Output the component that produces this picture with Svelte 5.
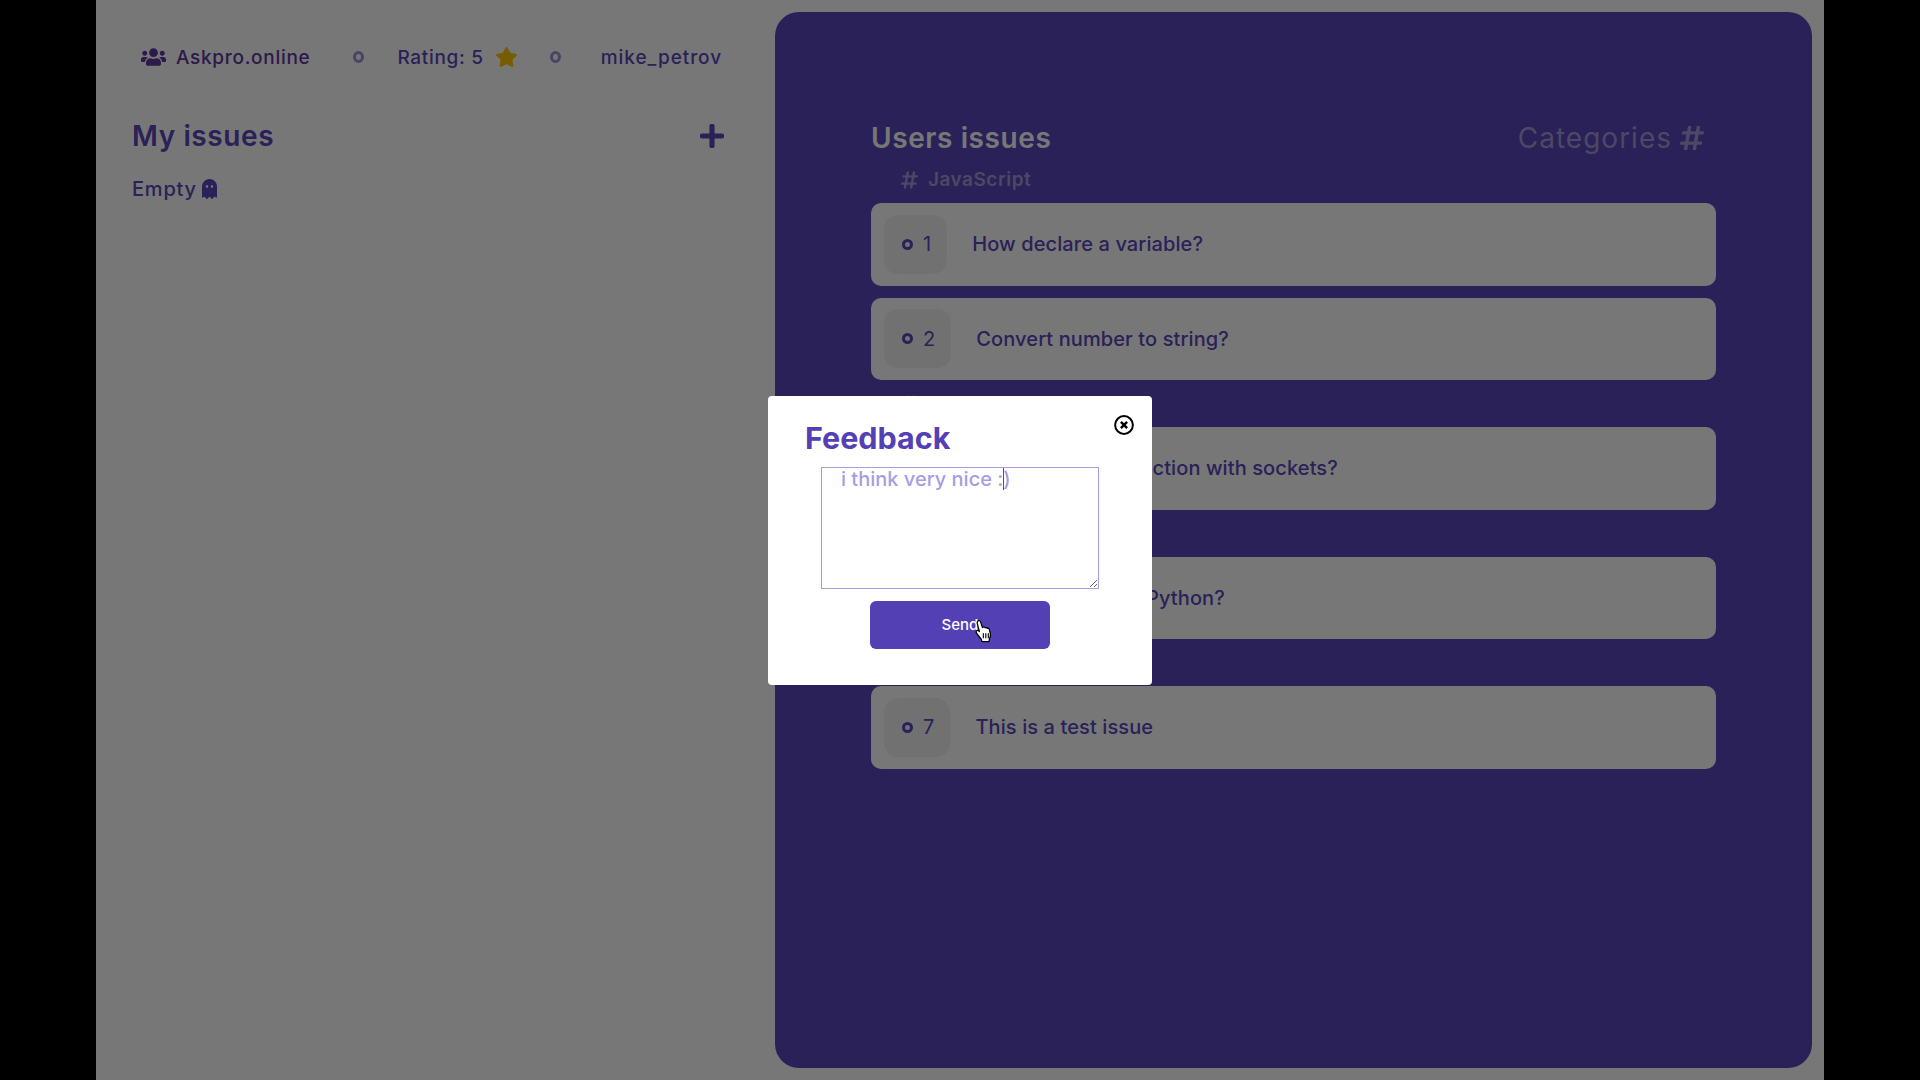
<script>
  const hash = "M440.667 182.109l7.143-40c1.313-7.355-4.342-14.109-11.813-14.109h-74.81l14.623-81.891C377.123 38.754 371.468 32 363.997 32h-40.632a12 12 0 0 0-11.813 9.891L296.175 128H197.54l14.623-81.891C213.477 38.754 207.822 32 200.35 32h-40.632a12 12 0 0 0-11.813 9.891L132.528 128H53.432a12 12 0 0 0-11.813 9.891l-7.143 40C33.163 185.246 38.818 192 46.289 192h74.81L98.242 320H19.146a12 12 0 0 0-11.813 9.891l-7.143 40C-1.123 377.246 4.532 384 12.003 384h74.81L72.19 465.891C70.877 473.246 76.532 480 84.003 480h40.632a12 12 0 0 0 11.813-9.891L151.826 384h98.634l-14.623 81.891C234.523 473.246 240.178 480 247.65 480h40.632a12 12 0 0 0 11.813-9.891L315.472 384h79.096a12 12 0 0 0 11.813-9.891l7.143-40c1.313-7.355-4.342-14.109-11.813-14.109h-74.81l22.857-128h79.096a12 12 0 0 0 11.813-9.891zM261.889 320h-98.634l22.857-128h98.634l-22.857 128z";

  const groups = [
    { name: "JavaScript", issues: [
      { id: 1, title: "How declare a variable?" },
      { id: 2, title: "Convert number to string?" },
    ]},
    { name: "NodeJS", issues: [{ id: 4, title: "How create connection with sockets?" }] },
    { name: "Python", issues: [{ id: 5, title: "How to use list in Python?" }] },
    { name: "Other", issues: [{ id: 7, title: "This is a test issue" }] },
  ];
</script>

<div class="page">
  <aside class="side">
    <nav class="top">
      <span class="brand">
        <svg class="users" viewBox="0 0 640 512"><path fill="currentColor" d="M96 224c35.3 0 64-28.7 64-64s-28.7-64-64-64-64 28.7-64 64 28.7 64 64 64zm448 0c35.3 0 64-28.7 64-64s-28.7-64-64-64-64 28.7-64 64 28.7 64 64 64zm32 32h-64c-17.6 0-33.5 7.1-45.1 18.6 40.3 22.1 68.9 62 75.1 109.4h66c17.7 0 32-14.3 32-32v-32c0-35.3-28.7-64-64-64zm-256 0c61.9 0 112-50.1 112-112S381.9 32 320 32 208 82.1 208 144s50.1 112 112 112zm76.8 32h-8.3c-20.8 10-43.9 16-68.5 16s-47.6-6-68.5-16h-8.3C179.6 288 128 339.6 128 403.2V432c0 26.5 21.5 48 48 48h288c26.5 0 48-21.5 48-48v-28.8c0-63.6-51.6-115.2-115.2-115.2zm-223.7-13.4C161.5 263.1 145.6 256 128 256H64c-35.3 0-64 28.7-64 64v32c0 17.7 14.3 32 32 32h65.9c6.3-47.4 34.9-87.3 75.2-109.4z"/></svg>
        Askpro.online
      </span>
      <i class="dot first"></i>
      <span class="rating">
        Rating: 5
        <svg class="star" viewBox="0 0 576 512"><path fill="currentColor" d="M259.3 17.8L194 150.2 47.9 171.5c-26.2 3.8-36.7 36.1-17.7 54.6l105.7 103-25 145.5c-4.5 26.3 23.2 46 46.4 33.7L288 439.6l130.7 68.7c23.2 12.2 50.9-7.4 46.4-33.7l-25-145.5 105.7-103c19-18.5 8.5-50.8-17.7-54.6L382 150.2 316.7 17.8c-11.7-23.6-45.6-23.9-57.4 0z"/></svg>
      </span>
      <i class="dot second"></i>
      <span class="user">mike_petrov</span>
    </nav>

    <div class="mine-head">
      <h2>My issues</h2>
      <svg class="plus" viewBox="0 0 448 512"><path fill="currentColor" d="M416 208H272V64c0-17.67-14.33-32-32-32h-32c-17.67 0-32 14.33-32 32v144H32c-17.67 0-32 14.33-32 32v32c0 17.67 14.33 32 32 32h144v144c0 17.67 14.33 32 32 32h32c17.67 0 32-14.33 32-32V304h144c17.67 0 32-14.33 32-32v-32c0-17.67-14.33-32-32-32z"/></svg>
    </div>
    <p class="empty">
      Empty
      <svg class="ghost" viewBox="0 0 384 512"><path fill="currentColor" d="M186.1.09C81.01 3.24 0 94.92 0 200.05v263.92c0 14.26 17.23 21.39 27.31 11.31l24.92-18.53c6.66-4.95 16-3.99 21.51 2.21l42.95 48.35c6.25 6.25 16.38 6.25 22.63 0l40.72-45.85c6.37-7.17 17.56-7.17 23.92 0l40.72 45.85c6.25 6.25 16.38 6.25 22.63 0l42.95-48.35c5.51-6.2 14.85-7.17 21.51-2.21l24.92 18.53c10.08 10.08 27.31 2.94 27.31-11.31V192C384 84 294.83-3.17 186.1.09zM128 224c-17.67 0-32-14.33-32-32s14.33-32 32-32 32 14.33 32 32-14.33 32-32 32zm128 0c-17.67 0-32-14.33-32-32s14.33-32 32-32 32 14.33 32 32-14.33 32-32 32z"/></svg>
    </p>
  </aside>

  <main class="panel">
    <header class="panel-head">
      <h2>Users issues</h2>
      <span class="cats">
        Categories
        <svg class="cats-hash" viewBox="0 0 448 512"><path fill="currentColor" d={hash}/></svg>
      </span>
    </header>

    {#each groups as group}
      <h3 class="cat">
        <svg class="cat-hash" viewBox="0 0 448 512"><path fill="currentColor" d={hash}/></svg>
        {group.name}
      </h3>
      {#each group.issues as issue}
        <div class="row">
          <span class="tag"><i class="ring"></i>{issue.id}</span>
          <span class="title">{issue.title}</span>
        </div>
      {/each}
    {/each}
  </main>
</div>

<div class="overlay">
  <div class="modal">
    <svg class="close" viewBox="0 0 18 18">
      <circle cx="9" cy="9" r="8" fill="none" stroke="#000" stroke-width="1.8"/>
      <path d="M6.2 6.2l5.6 5.6M11.8 6.2l-5.6 5.6" fill="none" stroke="#000" stroke-width="2.2"/>
    </svg>
    <h2>Feedback</h2>
    <div class="field">
      <textarea>i think very nice :)</textarea>
      <i class="caret"></i>
    </div>
    <div class="send-wrap">
      <button class="send">Send</button>
      <svg class="hand" viewBox="0 0 16 22">
        <path d="M3.6 1.6c1-.6 2 0 2.3 1l1.6 5 .4-.4c.8-.5 1.7-.2 2 .5.7-.4 1.5-.2 1.9.5.8-.3 1.5 0 1.8.8l1 4.4c.3 1.6-.1 3-.9 4.2l-.3 2.4H7l-.6-2.2L2.6 13c-.8-1-1-2-.2-2.6.6-.5 1.4-.3 2 .2L4.8 11 2.8 3.6c-.2-.8.1-1.6.8-2z" fill="#fff" stroke="#000" stroke-width="1.1" stroke-linejoin="round"/>
        <path d="M8.3 12.5v4.5M10.5 12.5v4.5M12.7 12.5v4.5" stroke="#000" stroke-width="1"/>
      </svg>
    </div>
  </div>
</div>

<style>
  :global(body) {
    background: #000;
    font-family: Inter, "Liberation Sans", sans-serif;
  }

  .page {
    width: 1728px;
    height: 1080px;
    margin: 0 auto;
    background: #fff;
    display: flex;
    overflow: hidden;
  }

  .side {
    flex: 1;
    padding: 0 50px 0 36px;
    color: #5948bb;
  }

  .top {
    display: flex;
    align-items: center;
    height: 24px;
    padding: 45px 0 0 9px;
    font-size: 19px;
    font-weight: 500;
    letter-spacing: 0.7px;
  }

  .brand {
    display: flex;
    align-items: center;
    gap: 10px;
    color: #61369f;
  }
  .users { width: 25px; height: 20px; }

  .dot {
    width: 11px;
    height: 12px;
    box-sizing: border-box;
    border: 3px solid #9d93d4;
    border-radius: 50%;
  }
  .dot.first { margin: 0 33px 0 43px; }
  .dot.second { margin: 0 40px 0 32px; }

  .rating { display: flex; align-items: center; gap: 11px; }
  .star { width: 23px; height: 20px; color: #fdc800; }
  .user { letter-spacing: 0.95px; }

  .mine-head {
    display: flex;
    align-items: center;
    justify-content: space-between;
    margin-top: 50px;
  }
  .mine-head h2 {
    margin: 0;
    font-size: 28px;
    line-height: 34px;
    font-weight: 600;
    letter-spacing: 0.6px;
  }
  .plus { width: 24px; height: 28px; margin-right: 1px; }

  .empty {
    display: flex;
    align-items: center;
    gap: 5px;
    margin: 24px 0 0;
    font-size: 20px;
    font-weight: 500;
    line-height: 24px;
    letter-spacing: 0.8px;
  }
  .ghost { width: 15px; height: 20px; }

  .panel {
    width: 1037px;
    height: 1056px;
    box-sizing: border-box;
    margin: 12px 12px 0 0;
    padding: 109px 96px 0 96px;
    background: #5948bb;
    border-radius: 24px;
  }

  .panel-head {
    display: flex;
    align-items: center;
    justify-content: space-between;
    height: 34px;
    padding-right: 12px;
    color: #fff;
  }
  .panel-head h2 {
    margin: 0;
    font-size: 28px;
    font-weight: 600;
    letter-spacing: 0.6px;
  }

  .cats {
    display: flex;
    align-items: center;
    gap: 8px;
    font-size: 28px;
    font-weight: 400;
    letter-spacing: 1px;
    color: #a49bd8;
  }
  .cats-hash { width: 24px; height: 28px; }

  .cat {
    display: flex;
    align-items: center;
    gap: 10px;
    height: 47px;
    margin: -12px 0 0;
    padding-left: 30px;
    font-size: 19px;
    font-weight: 600;
    letter-spacing: 0.5px;
    color: #a49bd8;
  }
  .panel-head + .cat { margin-top: 1px; }
  .cat-hash { width: 17px; height: 20px; }

  .row {
    display: flex;
    align-items: center;
    gap: 25px;
    height: 82.5px;
    box-sizing: border-box;
    margin-bottom: 12px;
    padding-left: 13px;
    background: #fff;
    border-radius: 10px;
    color: #5948bb;
    font-size: 20px;
    font-weight: 500;
    letter-spacing: 0.1px;
  }

  .tag {
    display: flex;
    align-items: center;
    gap: 10px;
    height: 59px;
    padding: 0 16px 0 18px;
    background: #f3f3f3;
    border-radius: 14px;
    font-weight: 400;
  }

  .ring {
    width: 11px;
    height: 11px;
    box-sizing: border-box;
    border: 3px solid #5948bb;
    border-radius: 50%;
  }

  .overlay {
    position: fixed;
    inset: 0;
    display: grid;
    place-items: center;
    background: rgba(0, 0, 0, 0.535);
  }

  .modal {
    position: relative;
    width: 384px;
    height: 289px;
    box-sizing: border-box;
    padding: 22px 53px 0;
    background: #fff;
    border-radius: 4px;
  }
  .modal h2 {
    margin: 0 0 0 -16px;
    font-size: 30.5px;
    line-height: 40px;
    font-weight: 700;
    color: #5440b5;
  }

  .close {
    position: absolute;
    top: 19px;
    right: 18px;
    width: 20px;
    height: 20px;
  }

  .field {
    position: relative;
    margin-top: 9px;
    height: 122px;
  }

  textarea {
    display: block;
    width: 100%;
    height: 122px;
    box-sizing: border-box;
    margin: 0;
    padding: 0 0 0 19px;
    border: 1px solid #a79ddf;
    border-radius: 0;
    outline: none;
    font: 500 20px/22px Inter, "Liberation Sans", sans-serif;
    color: #a79ddf;
  }

  .caret {
    position: absolute;
    left: 182px;
    top: 1px;
    width: 1px;
    height: 22px;
    background: #5440b5;
  }

  .send-wrap {
    position: relative;
    width: 180px;
    margin: 12px auto 0;
  }

  .send {
    display: block;
    width: 100%;
    height: 48px;
    border: 0;
    border-radius: 6px;
    background: #5440b5;
    color: #fff;
    font: 500 15px Inter, "Liberation Sans", sans-serif;
  }

  .hand {
    position: absolute;
    left: 104px;
    top: 18px;
    width: 18px;
    height: 25px;
  }
</style>
